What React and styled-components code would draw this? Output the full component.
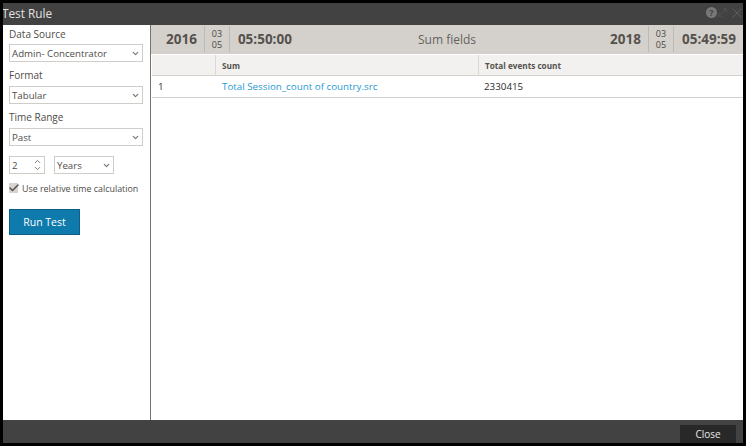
import React from 'react'
import styled, { createGlobalStyle } from 'styled-components'
import { ChevronDown, ChevronUp, Check, X, MoveDiagonal } from 'lucide-react'

const GlobalStyle = createGlobalStyle`
  html, body {
    margin: 0;
    padding: 0;
    background: #000;
  }
  * {
    box-sizing: border-box;
  }
`

const rows = [
  { id: 1, field: 'Total Session_count of country.src', count: '2330415' },
]

function Select({ value, width }) {
  return (
    <SelectBox $width={width}>
      <span>{value}</span>
      <ChevronDown size={9} strokeWidth={3} color="#77736e" />
    </SelectBox>
  )
}

function App() {
  return (
    <Window>
      <GlobalStyle />
      <TitleBar>
        <Title>Test Rule</Title>
        <TitleIcons>
          <HelpIcon>?</HelpIcon>
          <MoveDiagonal size={13} strokeWidth={1} color="#5c5c5c" />
          <X size={16} strokeWidth={1} color="#6a6a6a" />
        </TitleIcons>
      </TitleBar>
      <Body>
        <Sidebar>
          <Label>Data Source</Label>
          <Select value="Admin- Concentrator" />
          <Label>Format</Label>
          <Select value="Tabular" />
          <Label>Time Range</Label>
          <Select value="Past" />
          <RangeRow>
            <Spinner>
              <span>2</span>
              <SpinArrows>
                <ChevronUp size={9} strokeWidth={2.5} color="#77736e" />
                <ChevronDown size={9} strokeWidth={2.5} color="#77736e" />
              </SpinArrows>
            </Spinner>
            <Select value="Years" width="60px" />
          </RangeRow>
          <CheckRow>
            <CheckBox>
              <Check size={12} strokeWidth={3} color="#55524e" />
            </CheckBox>
            <span>Use relative time calculation</span>
          </CheckRow>
          <RunButton>Run Test</RunButton>
        </Sidebar>
        <Main>
          <DateBar>
            <DateGroup>
              <Big>2016</Big>
              <Days><span>03</span><span>05</span></Days>
              <Big>05:50:00</Big>
            </DateGroup>
            <BarTitle>Sum fields</BarTitle>
            <DateGroup>
              <Big>2018</Big>
              <Days><span>03</span><span>05</span></Days>
              <Big>05:49:59</Big>
            </DateGroup>
          </DateBar>
          <Table>
            <HeadRow>
              <HeadCell />
              <HeadCell>Sum</HeadCell>
              <HeadCell>Total events count</HeadCell>
            </HeadRow>
            {rows.map((row) => (
              <DataRow key={row.id}>
                <Cell>{row.id}</Cell>
                <LinkCell>{row.field}</LinkCell>
                <Cell>{row.count}</Cell>
              </DataRow>
            ))}
          </Table>
        </Main>
      </Body>
      <Footer>
        <CloseButton>Close</CloseButton>
      </Footer>
    </Window>
  )
}

const Window = styled.div`
  width: 740px;
  height: 440px;
  margin: 3px;
  background: #fff;
  display: flex;
  flex-direction: column;
  overflow: hidden;
  font-family: "Open Sans", sans-serif;
`
const TitleBar = styled.div`
  height: 22px;
  flex: none;
  background: #424242;
  display: flex;
  align-items: center;
  justify-content: space-between;
  overflow: hidden;
`
const Title = styled.div`
  font-size: 11.8px;
  color: #e2e2e2;
  margin-left: -1px;
  margin-bottom: 3px;
`
const TitleIcons = styled.div`
  display: flex;
  align-items: center;
  margin-right: -2px;
  margin-bottom: 3px;
`
const HelpIcon = styled.div`
  width: 11px;
  height: 11px;
  margin-right: -1px;
  border-radius: 50%;
  background: #787878;
  color: #424242;
  font-size: 9px;
  font-weight: 700;
  line-height: 11px;
  text-align: center;
`
const Body = styled.div`
  flex: 1;
  display: flex;
  min-height: 0;
`
const Sidebar = styled.div`
  width: 148px;
  flex: none;
  border-right: 1px solid #77736e;
  padding: 0 6px;
  display: flex;
  flex-direction: column;
  color: #4f4c48;
`
const Label = styled.div`
  height: 14px;
  line-height: 14px;
  margin-top: 6px;
  margin-bottom: 4px;
  font-size: 10px;
  &:first-child {
    height: 17px;
    line-height: 18px;
    margin-top: 0;
    margin-bottom: 2px;
  }
`
const SelectBox = styled.div`
  width: ${(p) => p.$width || '134px'};
  height: 18px;
  flex: none;
  border: 1px solid #d0cdc8;
  background: #fff;
  padding: 0 2px;
  display: flex;
  align-items: center;
  justify-content: space-between;
  font-size: 9.7px;
  color: #4f4c48;
`
const RangeRow = styled.div`
  display: flex;
  gap: 9px;
  margin-top: 10px;
`
const Spinner = styled.div`
  width: 36px;
  height: 18px;
  border: 1px solid #d0cdc8;
  padding: 0 3px 0 2px;
  display: flex;
  align-items: center;
  justify-content: space-between;
  font-size: 9.7px;
`
const SpinArrows = styled.div`
  display: flex;
  flex-direction: column;
  margin-right: -1px;
  & svg {
    margin: -1px 0;
    display: block;
  }
`
const CheckRow = styled.div`
  display: flex;
  align-items: center;
  gap: 4px;
  margin-top: 7px;
  height: 14px;
  font-size: 8.9px;
  white-space: nowrap;
`
const CheckBox = styled.div`
  width: 9px;
  height: 10px;
  background: #d8d5d0;
  display: flex;
  align-items: center;
  justify-content: center;
  & svg {
    flex: none;
  }
`
const RunButton = styled.button`
  width: 71px;
  height: 26px;
  margin-top: 14px;
  padding: 0;
  background: #0f7aac;
  border: 1px solid #0b5f88;
  color: #fff;
  font-family: inherit;
  font-size: 10.5px;
`
const Main = styled.div`
  flex: 1;
  min-width: 0;
  display: flex;
  flex-direction: column;
`
const DateBar = styled.div`
  height: 29px;
  flex: none;
  background: #d4d1cc;
  display: flex;
  align-items: center;
  justify-content: space-between;
  padding: 1px 7px 2px 15px;
`
const DateGroup = styled.div`
  display: flex;
  align-items: center;
  height: 26px;
`
const Big = styled.div`
  font-size: 13.5px;
  font-weight: 700;
  color: #55524e;
  white-space: nowrap;
`
const Days = styled.div`
  width: 26px;
  height: 26px;
  margin: 0 8px 0 7px;
  border-left: 1px solid #bdbab5;
  border-right: 1px solid #bdbab5;
  display: flex;
  flex-direction: column;
  align-items: center;
  justify-content: center;
  font-size: 9px;
  line-height: 11px;
  color: #4a4744;
`
const BarTitle = styled.div`
  font-size: 12px;
  color: #66635f;
  margin-right: 8px;
`
const Table = styled.div`
  margin: 1px 0 0 1px;
  font-size: 9.8px;
`
const HeadRow = styled.div`
  display: grid;
  grid-template-columns: 63px 263px 1fr;
  height: 21px;
  background: #f2f1ef;
  border-bottom: 1px solid #d4d1cc;
  font-size: 8.2px;
  font-weight: 700;
  color: #55524e;
`
const HeadCell = styled.div`
  display: flex;
  align-items: center;
  padding-left: 6px;
  & + & {
    border-left: 1px solid #dcd9d5;
  }
`
const DataRow = styled.div`
  display: grid;
  grid-template-columns: 63px 263px 1fr;
  height: 22px;
  border-bottom: 1px solid #d4d1cc;
  color: #2b2b2b;
`
const Cell = styled.div`
  display: flex;
  align-items: center;
  padding-left: 6px;
  white-space: nowrap;
`
const LinkCell = styled(Cell)`
  padding-left: 7px;
  color: #1f9ad6;
`
const Footer = styled.div`
  height: 23px;
  flex: none;
  background: #424242;
  display: flex;
  align-items: flex-end;
  justify-content: flex-end;
  padding-right: 7px;
`
const CloseButton = styled.button`
  width: 56px;
  height: 18px;
  padding: 0;
  border: 0;
  background: #282828;
  color: #e8e8e8;
  font-family: inherit;
  font-size: 10px;
`

export default App
